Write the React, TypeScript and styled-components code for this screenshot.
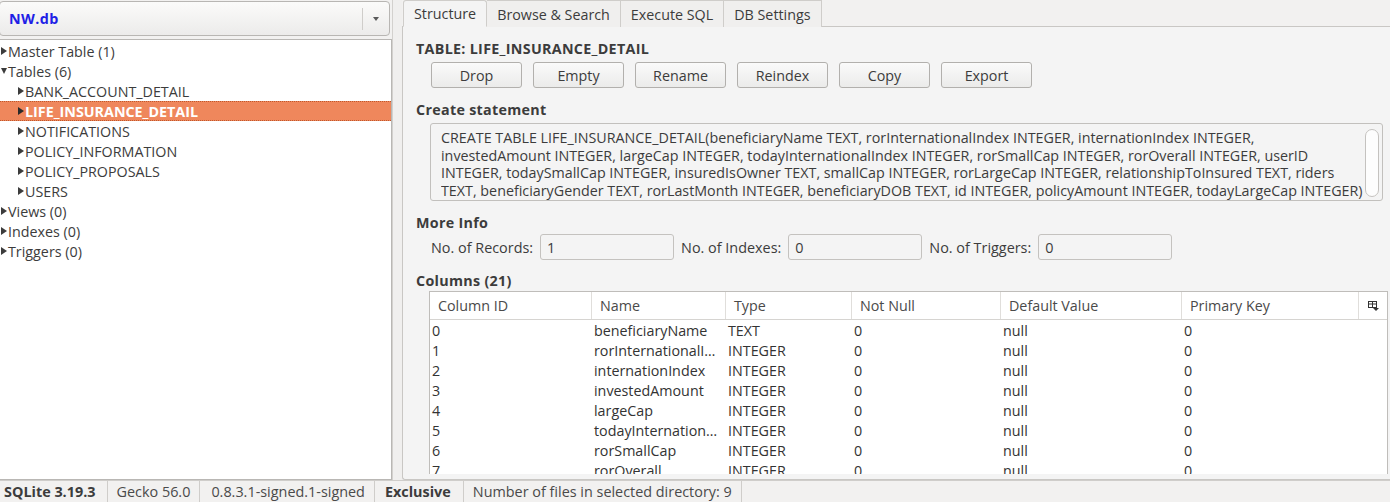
import React from "react";
import styled, { createGlobalStyle } from "styled-components";

const GlobalStyle = createGlobalStyle`
  html, body { margin: 0; padding: 0; }
  body {
    font-family: "Open Sans", "Noto Sans", sans-serif;
    font-size: 14.3px;
    color: #3c3c3c;
    background: #f2f1f0;
    overflow: hidden;
  }
  * { box-sizing: border-box; }
`;

const Window = styled.div`
  width: 1390px;
  height: 502px;
  display: flex;
  flex-direction: column;
  background: #f2f1f0;
`;

const Main = styled.div`
  flex: 1;
  display: flex;
  min-height: 0;
`;

const LeftPanel = styled.div`
  width: 392px;
  display: flex;
  flex-direction: column;
  gap: 3px;
  padding-top: 1px;
`;

const DbSelect = styled.div`
  height: 35px;
  margin-right: 2px;
  margin-left: -1px;
  border: 1px solid #b8b6b3;
  border-radius: 4px;
  background: linear-gradient(#fbfbfa, #ecebea);
  display: flex;
  align-items: center;
  padding-left: 9px;
`;

const DbName = styled.span`
  color: #1f1fe6;
  font-weight: 700;
  font-size: 14.3px;
  letter-spacing: 0.4px;
  flex: 1;
`;

const SelectDivider = styled.div`
  width: 1px;
  height: 22px;
  background: #cfcdca;
  margin-right: 10px;
`;

const SelectArrow = styled.div`
  width: 0;
  height: 0;
  border-left: 3px solid transparent;
  border-right: 3px solid transparent;
  border-top: 4px solid #5a5a5a;
  margin-right: 10px;
`;

const Tree = styled.div`
  flex: 1;
  background: #ffffff;
  border: 1px solid #b9b7b4;
  border-left: none;
  display: flex;
  flex-direction: column;
  padding-top: 1px;
`;

const TreeRow = styled.div<{ $indent: number; $selected?: boolean }>`
  height: 20px;
  display: flex;
  align-items: center;
  padding-left: ${(p) => p.$indent}px;
  background: ${(p) => (p.$selected ? "#ef875c" : "transparent")};
  color: ${(p) => (p.$selected ? "#ffffff" : "#3c3c3c")};
  font-weight: ${(p) => (p.$selected ? 700 : 400)};
  border-top: 1px dotted ${(p) => (p.$selected ? "#c0582c" : "transparent")};
  border-bottom: 1px dotted ${(p) => (p.$selected ? "#c0582c" : "transparent")};
  white-space: nowrap;
`;

const Twisty = styled.span<{ $open?: boolean; $light?: boolean }>`
  display: inline-block;
  height: 0;
  width: 0;
  margin-right: 1px;
  ${(p) =>
    p.$open
      ? `border-left: 3.5px solid transparent; border-right: 3.5px solid transparent; border-top: 6px solid #3c3c3c;`
      : `border-top: 4px solid transparent; border-bottom: 4px solid transparent; border-left: 6px solid ${p.$light ? "#2a2a2a" : "#3c3c3c"};`}
`;

const Splitter = styled.div`
  width: 10px;
  background: #f0efee;
  border-left: 1px solid #d3d1ce;
`;

const RightPanel = styled.div`
  flex: 1;
  display: flex;
  flex-direction: column;
  min-width: 0;
`;

const TabBar = styled.div`
  height: 27px;
  display: flex;
  align-items: flex-end;
  border-bottom: 1px solid #c9c7c4;
  padding-left: 1px;
`;

const Tab = styled.div<{ $active?: boolean }>`
  height: 27px;
  padding: 0 10px 0 10px;
  display: flex;
  align-items: center;
  border: 1px solid #cfcdca;
  border-bottom: ${(p) => (p.$active ? "1px solid #f4f4f4" : "none")};
  border-left: ${(p) => (p.$active ? "1px solid #cfcdca" : "none")};
  border-radius: ${(p) => (p.$active ? "3px 3px 0 0" : "0")};
  background: ${(p) => (p.$active ? "#f4f4f4" : "#f0efee")};
  margin-bottom: -1px;
  color: #3c3c3c;
  white-space: nowrap;
`;

const Pane = styled.div`
  flex: 1;
  border-left: 1px solid #c9c7c4;
  border-bottom: 1px solid #c9c7c4;
  border-bottom-left-radius: 3px;
  background: #f4f4f4;
  display: flex;
  flex-direction: column;
  padding: 14px 2px 5px 13px;
  min-height: 0;
`;

const SectionTitle = styled.div<{ $mt?: number }>`
  font-weight: 700;
  letter-spacing: 0.3px;
  margin-top: ${(p) => p.$mt ?? 0}px;
  line-height: 16px;
`;

const ButtonRow = styled.div`
  display: flex;
  gap: 11px;
  padding-left: 15px;
  margin-top: 5px;
`;

const Button = styled.div`
  width: 91px;
  height: 26px;
  border: 1px solid #b2b0ad;
  border-radius: 3px;
  background: linear-gradient(#fafafa, #ebebea);
  display: flex;
  align-items: center;
  justify-content: center;
  color: #3c3c3c;
`;

const SqlBox = styled.div`
  margin: 5px 5px 0 14px;
  height: 78px;
  border: 1px solid #c2c0bd;
  border-radius: 3px;
  background: #f4f4f4;
  display: flex;
  padding: 5px 3px 0 10px;
  overflow: hidden;
`;

const SqlText = styled.div`
  flex: 1;
  line-height: 17.7px;
  white-space: pre;
  overflow: hidden;
  color: #3c3c3c;
`;

const ScrollThumb = styled.div`
  width: 14px;
  height: 68px;
  border: 1px solid #c4c2bf;
  border-radius: 7px;
  background: #fdfdfd;
`;

const InfoRow = styled.div`
  display: flex;
  align-items: center;
  margin-top: 3px;
  padding-left: 15px;
  gap: 7px;
`;

const InfoLabel = styled.span`
  font-size: 14.4px;
  font-stretch: 90%;
  color: #3c3c3c;
`;

const InfoField = styled.div`
  width: 134px;
  height: 26px;
  border: 1px solid #c4c2bf;
  border-radius: 3px;
  background: #f4f4f4;
  display: flex;
  align-items: center;
  padding-left: 6px;
  font-size: 14.4px;
  font-stretch: 90%;
`;

const TableBox = styled.div`
  flex: 1;
  margin: 2px 0 0 13px;
  border: 1px solid #bfbdba;
  border-bottom: none;
  background: #ffffff;
  display: flex;
  flex-direction: column;
  min-height: 0;
  overflow: hidden;
`;

const HeaderRow = styled.div`
  display: flex;
  height: 28px;
  border-bottom: 1px solid #d6d4d1;
  background: #ffffff;
  flex-shrink: 0;
`;

const HeaderCell = styled.div<{ $w: number }>`
  width: ${(p) => p.$w}px;
  flex-shrink: 0;
  display: flex;
  align-items: center;
  padding-left: 8px;
  border-right: 1px solid #e0dedb;
  color: #4a4a4a;
  white-space: nowrap;
`;

const PickerCell = styled.div`
  flex: 1;
  display: flex;
  align-items: center;
  justify-content: center;
`;

const BodyRow = styled.div`
  display: flex;
  height: 20px;
  align-items: center;
  flex-shrink: 0;
`;

const BodyCell = styled.div<{ $w: number }>`
  width: ${(p) => p.$w}px;
  flex-shrink: 0;
  padding: 0 3px 0 2px;
  white-space: nowrap;
  overflow: hidden;
  text-overflow: ellipsis;
  color: #333333;
`;

const StatusBar = styled.div`
  height: 22px;
  display: flex;
  align-items: stretch;
  border-top: 1px solid #cfcdca;
  background: #f2f1f0;
`;

const StatusPanel = styled.div<{ $bold?: boolean; $pl: number; $pr: number }>`
  display: flex;
  align-items: center;
  padding: 0 ${(p) => p.$pr}px 0 ${(p) => p.$pl}px;
  border-right: 1px solid #cfcdca;
  font-size: 14.4px;
  font-weight: ${(p) => (p.$bold ? 700 : 400)};
  color: ${(p) => (p.$bold ? "#3c3c3c" : "#4a4a4a")};
  white-space: nowrap;
`;

const widths = [162, 134, 126, 149, 181, 177];
const headers = ["Column ID", "Name", "Type", "Not Null", "Default Value", "Primary Key"];

const rows: [string, string, string][] = [
  ["0", "beneficiaryName", "TEXT"],
  ["1", "rorInternationalIndex", "INTEGER"],
  ["2", "internationIndex", "INTEGER"],
  ["3", "investedAmount", "INTEGER"],
  ["4", "largeCap", "INTEGER"],
  ["5", "todayInternationalIndex", "INTEGER"],
  ["6", "rorSmallCap", "INTEGER"],
  ["7", "rorOverall", "INTEGER"],
];

const sqlLines = [
  "CREATE TABLE LIFE_INSURANCE_DETAIL(beneficiaryName TEXT, rorInternationalIndex INTEGER, internationIndex INTEGER,",
  "investedAmount INTEGER, largeCap INTEGER, todayInternationalIndex INTEGER, rorSmallCap INTEGER, rorOverall INTEGER, userID",
  "INTEGER, todaySmallCap INTEGER, insuredIsOwner TEXT, smallCap INTEGER, rorLargeCap INTEGER, relationshipToInsured TEXT, riders",
  "TEXT, beneficiaryGender TEXT, rorLastMonth INTEGER, beneficiaryDOB TEXT, id INTEGER, policyAmount INTEGER, todayLargeCap INTEGER)",
];

const ColumnPickerIcon = () => (
  <svg width="11" height="10" viewBox="0 0 11 10">
    <rect x="0.5" y="0.5" width="8" height="6" fill="none" stroke="#333" />
    <line x1="0.5" y1="3" x2="8.5" y2="3" stroke="#333" />
    <line x1="4.5" y1="0.5" x2="4.5" y2="6.5" stroke="#333" />
    <path d="M5 7 L11 7 L8 10 Z" fill="#333" />
  </svg>
);

export default function App() {
  return (
    <>
      <GlobalStyle />
      <Window>
        <Main>
          <LeftPanel>
            <DbSelect>
              <DbName>NW.db</DbName>
              <SelectDivider />
              <SelectArrow />
            </DbSelect>
            <Tree>
              <TreeRow $indent={1}><Twisty />Master Table (1)</TreeRow>
              <TreeRow $indent={1}><Twisty $open />Tables (6)</TreeRow>
              <TreeRow $indent={18}><Twisty />BANK_ACCOUNT_DETAIL</TreeRow>
              <TreeRow $indent={18} $selected><Twisty $light />LIFE_INSURANCE_DETAIL</TreeRow>
              <TreeRow $indent={18}><Twisty />NOTIFICATIONS</TreeRow>
              <TreeRow $indent={18}><Twisty />POLICY_INFORMATION</TreeRow>
              <TreeRow $indent={18}><Twisty />POLICY_PROPOSALS</TreeRow>
              <TreeRow $indent={18}><Twisty />USERS</TreeRow>
              <TreeRow $indent={1}><Twisty />Views (0)</TreeRow>
              <TreeRow $indent={1}><Twisty />Indexes (0)</TreeRow>
              <TreeRow $indent={1}><Twisty />Triggers (0)</TreeRow>
            </Tree>
          </LeftPanel>
          <Splitter />
          <RightPanel>
            <TabBar>
              <Tab $active>Structure</Tab>
              <Tab>Browse &amp; Search</Tab>
              <Tab>Execute SQL</Tab>
              <Tab>DB Settings</Tab>
            </TabBar>
            <Pane>
              <SectionTitle>TABLE: LIFE_INSURANCE_DETAIL</SectionTitle>
              <ButtonRow>
                <Button>Drop</Button>
                <Button>Empty</Button>
                <Button>Rename</Button>
                <Button>Reindex</Button>
                <Button>Copy</Button>
                <Button>Export</Button>
              </ButtonRow>
              <SectionTitle $mt={14}>Create statement</SectionTitle>
              <SqlBox>
                <SqlText>{sqlLines.join("\n")}</SqlText>
                <ScrollThumb />
              </SqlBox>
              <SectionTitle $mt={14}>More Info</SectionTitle>
              <InfoRow>
                <InfoLabel>No. of Records:</InfoLabel>
                <InfoField>1</InfoField>
                <InfoLabel>No. of Indexes:</InfoLabel>
                <InfoField>0</InfoField>
                <InfoLabel>No. of Triggers:</InfoLabel>
                <InfoField>0</InfoField>
              </InfoRow>
              <SectionTitle $mt={13}>Columns (21)</SectionTitle>
              <TableBox>
                <HeaderRow>
                  {headers.map((h, i) => (
                    <HeaderCell key={h} $w={widths[i]}>{h}</HeaderCell>
                  ))}
                  <PickerCell><ColumnPickerIcon /></PickerCell>
                </HeaderRow>
                {rows.map((r) => (
                  <BodyRow key={r[0]}>
                    <BodyCell $w={widths[0]}>{r[0]}</BodyCell>
                    <BodyCell $w={widths[1]}>{r[1]}</BodyCell>
                    <BodyCell $w={widths[2]}>{r[2]}</BodyCell>
                    <BodyCell $w={widths[3]}>0</BodyCell>
                    <BodyCell $w={widths[4]}>null</BodyCell>
                    <BodyCell $w={widths[5]}>0</BodyCell>
                  </BodyRow>
                ))}
              </TableBox>
            </Pane>
          </RightPanel>
        </Main>
        <StatusBar>
          <StatusPanel $bold $pl={4} $pr={11}>SQLite 3.19.3</StatusPanel>
          <StatusPanel $pl={9} $pr={9}>Gecko 56.0</StatusPanel>
          <StatusPanel $pl={11} $pr={9}>0.8.3.1-signed.1-signed</StatusPanel>
          <StatusPanel $bold $pl={10} $pr={12}>Exclusive</StatusPanel>
          <StatusPanel $pl={9} $pr={9}>Number of files in selected directory: 9</StatusPanel>
        </StatusBar>
      </Window>
    </>
  );
}
